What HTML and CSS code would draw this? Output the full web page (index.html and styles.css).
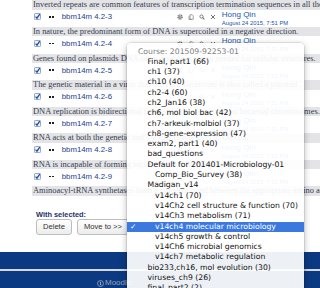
FILE: index.html
```html
<!DOCTYPE html>
<html lang="en">
<head>
    <meta charset="UTF-8">
    <title>Question bank</title>
    <link rel="stylesheet" href="styles.css">
</head>
<body>
    <div class="question-list">
        <div class="question">
            <div class="qtext">Inverted repeats are common features of transcription termination sequences in all the domains of life.</div>
            <div class="qrow">
                <span class="check"><svg viewBox="0 0 8 8" width="7" height="7"><rect x="0.5" y="0.5" width="7" height="7" rx="1" fill="#eef3fb" stroke="#8497b8"/><path d="M1.8 4.2 L3.4 5.9 L6.6 1.2" fill="none" stroke="#1d4b9e" stroke-width="1.4"/></svg></span>
                <span class="qtype"><i></i><i></i></span>
                <a class="qname" href="#">bbm14m 4.2-3</a>
                <span class="actions">
                    <svg viewBox="0 0 12 12"><circle cx="6" cy="6" r="4.2" fill="none" stroke="#707070" stroke-width="2.6" stroke-dasharray="2 1.3"/><circle cx="6" cy="6" r="3.2" fill="#707070"/><circle cx="6" cy="6" r="1.4" fill="#fff"/></svg>
                    <svg viewBox="0 0 12 12"><path d="M4 1.5 H8.5 L10.5 3.5 V10.5 H4 Z" fill="#fff" stroke="#707070" stroke-width="1.3"/><path d="M2 3.5 V11 H7" fill="none" stroke="#707070" stroke-width="1.3"/></svg>
                    <svg viewBox="0 0 12 12"><circle cx="5" cy="5" r="3.2" fill="none" stroke="#707070" stroke-width="1.8"/><path d="M7.3 7.3 L10.8 10.8" stroke="#707070" stroke-width="2.2"/></svg>
                    <svg viewBox="0 0 12 12"><path d="M2 2 L10 10 M10 2 L2 10" stroke="#707070" stroke-width="2"/></svg>
                </span>
                <div class="author"><a class="author-name" href="#">Hong Qin</a><span class="author-date">August 24 2015, 7:51 PM</span></div>
            </div>
        </div>
        <div class="question">
            <div class="qtext">In nature, the predominant form of DNA is supercoiled in a negative direction.</div>
            <div class="qrow">
                <span class="check"><svg viewBox="0 0 8 8" width="7" height="7"><rect x="0.5" y="0.5" width="7" height="7" rx="1" fill="#eef3fb" stroke="#8497b8"/><path d="M1.8 4.2 L3.4 5.9 L6.6 1.2" fill="none" stroke="#1d4b9e" stroke-width="1.4"/></svg></span>
                <span class="qtype"><i></i><i></i></span>
                <a class="qname" href="#">bbm14m 4.2-4</a>
                <span class="actions">
                    <svg viewBox="0 0 12 12"><circle cx="6" cy="6" r="4.2" fill="none" stroke="#707070" stroke-width="2.6" stroke-dasharray="2 1.3"/><circle cx="6" cy="6" r="3.2" fill="#707070"/><circle cx="6" cy="6" r="1.4" fill="#fff"/></svg>
                    <svg viewBox="0 0 12 12"><path d="M4 1.5 H8.5 L10.5 3.5 V10.5 H4 Z" fill="#fff" stroke="#707070" stroke-width="1.3"/><path d="M2 3.5 V11 H7" fill="none" stroke="#707070" stroke-width="1.3"/></svg>
                    <svg viewBox="0 0 12 12"><circle cx="5" cy="5" r="3.2" fill="none" stroke="#707070" stroke-width="1.8"/><path d="M7.3 7.3 L10.8 10.8" stroke="#707070" stroke-width="2.2"/></svg>
                    <svg viewBox="0 0 12 12"><path d="M2 2 L10 10 M10 2 L2 10" stroke="#707070" stroke-width="2"/></svg>
                </span>
                <div class="author"><a class="author-name" href="#">Hong Qin</a><span class="author-date">August 24 2015, 7:51 PM</span></div>
            </div>
        </div>
        <div class="question">
            <div class="qtext">Genes found on plasmids DNA often encode proteins needed for cellular structures.</div>
            <div class="qrow">
                <span class="check"><svg viewBox="0 0 8 8" width="7" height="7"><rect x="0.5" y="0.5" width="7" height="7" rx="1" fill="#eef3fb" stroke="#8497b8"/><path d="M1.8 4.2 L3.4 5.9 L6.6 1.2" fill="none" stroke="#1d4b9e" stroke-width="1.4"/></svg></span>
                <span class="qtype"><i></i><i></i></span>
                <a class="qname" href="#">bbm14m 4.2-5</a>
                <span class="actions">
                    <svg viewBox="0 0 12 12"><circle cx="6" cy="6" r="4.2" fill="none" stroke="#707070" stroke-width="2.6" stroke-dasharray="2 1.3"/><circle cx="6" cy="6" r="3.2" fill="#707070"/><circle cx="6" cy="6" r="1.4" fill="#fff"/></svg>
                    <svg viewBox="0 0 12 12"><path d="M4 1.5 H8.5 L10.5 3.5 V10.5 H4 Z" fill="#fff" stroke="#707070" stroke-width="1.3"/><path d="M2 3.5 V11 H7" fill="none" stroke="#707070" stroke-width="1.3"/></svg>
                    <svg viewBox="0 0 12 12"><circle cx="5" cy="5" r="3.2" fill="none" stroke="#707070" stroke-width="1.8"/><path d="M7.3 7.3 L10.8 10.8" stroke="#707070" stroke-width="2.2"/></svg>
                    <svg viewBox="0 0 12 12"><path d="M2 2 L10 10 M10 2 L2 10" stroke="#707070" stroke-width="2"/></svg>
                </span>
                <div class="author"><a class="author-name" href="#">Hong Qin</a><span class="author-date">August 24 2015, 7:51 PM</span></div>
            </div>
        </div>
        <div class="question">
            <div class="qtext">The genetic material in a virus that infects a bacterium is also called a plasmid.</div>
            <div class="qrow">
                <span class="check"><svg viewBox="0 0 8 8" width="7" height="7"><rect x="0.5" y="0.5" width="7" height="7" rx="1" fill="#eef3fb" stroke="#8497b8"/><path d="M1.8 4.2 L3.4 5.9 L6.6 1.2" fill="none" stroke="#1d4b9e" stroke-width="1.4"/></svg></span>
                <span class="qtype"><i></i><i></i></span>
                <a class="qname" href="#">bbm14m 4.2-6</a>
                <span class="actions">
                    <svg viewBox="0 0 12 12"><circle cx="6" cy="6" r="4.2" fill="none" stroke="#707070" stroke-width="2.6" stroke-dasharray="2 1.3"/><circle cx="6" cy="6" r="3.2" fill="#707070"/><circle cx="6" cy="6" r="1.4" fill="#fff"/></svg>
                    <svg viewBox="0 0 12 12"><path d="M4 1.5 H8.5 L10.5 3.5 V10.5 H4 Z" fill="#fff" stroke="#707070" stroke-width="1.3"/><path d="M2 3.5 V11 H7" fill="none" stroke="#707070" stroke-width="1.3"/></svg>
                    <svg viewBox="0 0 12 12"><circle cx="5" cy="5" r="3.2" fill="none" stroke="#707070" stroke-width="1.8"/><path d="M7.3 7.3 L10.8 10.8" stroke="#707070" stroke-width="2.2"/></svg>
                    <svg viewBox="0 0 12 12"><path d="M2 2 L10 10 M10 2 L2 10" stroke="#707070" stroke-width="2"/></svg>
                </span>
                <div class="author"><a class="author-name" href="#">Hong Qin</a><span class="author-date">August 24 2015, 7:51 PM</span></div>
            </div>
        </div>
        <div class="question">
            <div class="qtext">DNA replication is bidirectional from a single origin in most bacterial chromosomes.</div>
            <div class="qrow">
                <span class="check"><svg viewBox="0 0 8 8" width="7" height="7"><rect x="0.5" y="0.5" width="7" height="7" rx="1" fill="#eef3fb" stroke="#8497b8"/><path d="M1.8 4.2 L3.4 5.9 L6.6 1.2" fill="none" stroke="#1d4b9e" stroke-width="1.4"/></svg></span>
                <span class="qtype"><i></i><i></i></span>
                <a class="qname" href="#">bbm14m 4.2-7</a>
                <span class="actions">
                    <svg viewBox="0 0 12 12"><circle cx="6" cy="6" r="4.2" fill="none" stroke="#707070" stroke-width="2.6" stroke-dasharray="2 1.3"/><circle cx="6" cy="6" r="3.2" fill="#707070"/><circle cx="6" cy="6" r="1.4" fill="#fff"/></svg>
                    <svg viewBox="0 0 12 12"><path d="M4 1.5 H8.5 L10.5 3.5 V10.5 H4 Z" fill="#fff" stroke="#707070" stroke-width="1.3"/><path d="M2 3.5 V11 H7" fill="none" stroke="#707070" stroke-width="1.3"/></svg>
                    <svg viewBox="0 0 12 12"><circle cx="5" cy="5" r="3.2" fill="none" stroke="#707070" stroke-width="1.8"/><path d="M7.3 7.3 L10.8 10.8" stroke="#707070" stroke-width="2.2"/></svg>
                    <svg viewBox="0 0 12 12"><path d="M2 2 L10 10 M10 2 L2 10" stroke="#707070" stroke-width="2"/></svg>
                </span>
                <div class="author"><a class="author-name" href="#">Hong Qin</a><span class="author-date">August 24 2015, 7:51 PM</span></div>
            </div>
        </div>
        <div class="question">
            <div class="qtext">RNA acts at both the genetic and the functional level in the cell.</div>
            <div class="qrow">
                <span class="check"><svg viewBox="0 0 8 8" width="7" height="7"><rect x="0.5" y="0.5" width="7" height="7" rx="1" fill="#eef3fb" stroke="#8497b8"/><path d="M1.8 4.2 L3.4 5.9 L6.6 1.2" fill="none" stroke="#1d4b9e" stroke-width="1.4"/></svg></span>
                <span class="qtype"><i></i><i></i></span>
                <a class="qname" href="#">bbm14m 4.2-8</a>
                <span class="actions">
                    <svg viewBox="0 0 12 12"><circle cx="6" cy="6" r="4.2" fill="none" stroke="#707070" stroke-width="2.6" stroke-dasharray="2 1.3"/><circle cx="6" cy="6" r="3.2" fill="#707070"/><circle cx="6" cy="6" r="1.4" fill="#fff"/></svg>
                    <svg viewBox="0 0 12 12"><path d="M4 1.5 H8.5 L10.5 3.5 V10.5 H4 Z" fill="#fff" stroke="#707070" stroke-width="1.3"/><path d="M2 3.5 V11 H7" fill="none" stroke="#707070" stroke-width="1.3"/></svg>
                    <svg viewBox="0 0 12 12"><circle cx="5" cy="5" r="3.2" fill="none" stroke="#707070" stroke-width="1.8"/><path d="M7.3 7.3 L10.8 10.8" stroke="#707070" stroke-width="2.2"/></svg>
                    <svg viewBox="0 0 12 12"><path d="M2 2 L10 10 M10 2 L2 10" stroke="#707070" stroke-width="2"/></svg>
                </span>
                <div class="author"><a class="author-name" href="#">Hong Qin</a><span class="author-date">August 24 2015, 7:51 PM</span></div>
            </div>
        </div>
        <div class="question">
            <div class="qtext">RNA is incapable of forming secondary structures by base pairing.</div>
            <div class="qrow">
                <span class="check"><svg viewBox="0 0 8 8" width="7" height="7"><rect x="0.5" y="0.5" width="7" height="7" rx="1" fill="#eef3fb" stroke="#8497b8"/><path d="M1.8 4.2 L3.4 5.9 L6.6 1.2" fill="none" stroke="#1d4b9e" stroke-width="1.4"/></svg></span>
                <span class="qtype"><i></i><i></i></span>
                <a class="qname" href="#">bbm14m 4.2-9</a>
                <span class="actions">
                    <svg viewBox="0 0 12 12"><circle cx="6" cy="6" r="4.2" fill="none" stroke="#707070" stroke-width="2.6" stroke-dasharray="2 1.3"/><circle cx="6" cy="6" r="3.2" fill="#707070"/><circle cx="6" cy="6" r="1.4" fill="#fff"/></svg>
                    <svg viewBox="0 0 12 12"><path d="M4 1.5 H8.5 L10.5 3.5 V10.5 H4 Z" fill="#fff" stroke="#707070" stroke-width="1.3"/><path d="M2 3.5 V11 H7" fill="none" stroke="#707070" stroke-width="1.3"/></svg>
                    <svg viewBox="0 0 12 12"><circle cx="5" cy="5" r="3.2" fill="none" stroke="#707070" stroke-width="1.8"/><path d="M7.3 7.3 L10.8 10.8" stroke="#707070" stroke-width="2.2"/></svg>
                    <svg viewBox="0 0 12 12"><path d="M2 2 L10 10 M10 2 L2 10" stroke="#707070" stroke-width="2"/></svg>
                </span>
                <div class="author"><a class="author-name" href="#">Hong Qin</a><span class="author-date">August 24 2015, 7:51 PM</span></div>
            </div>
        </div>
        <div class="question">
            <div class="qtext">Aminoacyl-tRNA synthetases form a covalent bond between the appropriate amino acid and tRNA.</div>
        </div>
    </div>

    <div class="bulk">
        <div class="bulk-label">With selected:</div>
        <div class="bulk-buttons">
            <button>Delete</button>
            <button>Move to &gt;&gt;</button>
        </div>
    </div>

    <footer class="footer">
        <div class="footer-top"></div>
        <div class="footer-bottom">
            <span class="moodle-logo"><svg viewBox="0 0 10 10" width="7" height="7"><circle cx="5" cy="5" r="4.2" fill="none" stroke="#9aa4b6" stroke-width="1.2"/><path d="M5 2.6 V7.4" stroke="#9aa4b6" stroke-width="1.6"/></svg>Moodle</span>
        </div>
    </footer>

    <div class="menu">
        <div class="menu-group">Course: 201509-92253-01</div>
        <div class="menu-item">Final, part1 (66)</div>
        <div class="menu-item">ch1 (37)</div>
        <div class="menu-item">ch10 (40)</div>
        <div class="menu-item">ch2-4 (60)</div>
        <div class="menu-item">ch2_Jan16 (38)</div>
        <div class="menu-item">ch6, mol biol bac (42)</div>
        <div class="menu-item">ch7-arkeuk-molbiol (37)</div>
        <div class="menu-item">ch8-gene-expression (47)</div>
        <div class="menu-item">exam2, part1 (40)</div>
        <div class="menu-item">bad_questions</div>
        <div class="menu-item">Default for 201401-Microbiology-01</div>
        <div class="menu-item sub">Comp_Bio_Survey (38)</div>
        <div class="menu-item">Madigan_v14</div>
        <div class="menu-item sub">v14ch1 (70)</div>
        <div class="menu-item sub">v14Ch2 cell structure &amp; function (70)</div>
        <div class="menu-item sub">v14Ch3 metabolism (71)</div>
        <div class="menu-item sub selected">v14ch4 molecular microbiology</div>
        <div class="menu-item sub">v14ch5 growth &amp; control</div>
        <div class="menu-item sub">v14Ch6 microbial genomics</div>
        <div class="menu-item sub">v14ch7 metabolic regulation</div>
        <div class="menu-item">bio233,ch16, mol evolution (30)</div>
        <div class="menu-item">viruses_ch9 (26)</div>
        <div class="menu-item">final_part2 (2)</div>
    </div>
</body>
</html>
```

FILE: styles.css
```css
body {
    margin: 0;
    width: 320px;
    height: 288px;
    overflow: hidden;
    position: relative;
    background: #fff;
    font-family: "Liberation Sans", Arial, sans-serif;
}

.question-list {
    padding: 0.4px 0 0 32px;
}

.qtext {
    height: 9.4px;
    line-height: 9.4px;
    padding-left: 1px;
    background: #e4e4e6;
    color: #333c50;
    font-family: "Liberation Serif", "Times New Roman", serif;
    font-size: 8.45px;
    white-space: nowrap;
    overflow: hidden;
}

.qrow {
    height: 17.2px;
    box-sizing: border-box;
    padding-bottom: 2.8px;
    display: flex;
    align-items: center;
}

.check {
    display: flex;
    margin-left: 2px;
}

.qtype {
    display: flex;
    gap: 1.2px;
    margin-left: 8px;
}

.qtype i {
    display: block;
    width: 1.8px;
    height: 1.8px;
    background: #222;
}

.qname {
    flex: 0 0 115px;
    margin-left: 8px;
    font-size: 7.8px;
    color: #1d3c8c;
    text-decoration: none;
    white-space: nowrap;
}

.actions {
    display: flex;
    gap: 5px;
}

.actions svg {
    width: 6px;
    height: 6px;
}

.author {
    align-self: flex-start;
    margin-left: 6px;
    white-space: nowrap;
    color: #2156b0;
}

.author-name {
    display: block;
    font-size: 8px;
    line-height: 10px;
    color: #2156b0;
    text-decoration: none;
}

.author-date {
    display: block;
    font-size: 5.9px;
    line-height: 6px;
}

.bulk {
    padding: 14px 0 0 36px;
}

.bulk-label {
    font-size: 7.4px;
    line-height: 9px;
    font-weight: bold;
    color: #1e2f6e;
}

.bulk-buttons {
    display: flex;
    gap: 5px;
}

.bulk-buttons button {
    height: 16px;
    padding: 0 6px;
    border: 1px solid #bdbdbd;
    border-radius: 3px;
    background: linear-gradient(#ffffff, #ececec);
    color: #333;
    font-family: "Liberation Sans", Arial, sans-serif;
    font-size: 7.6px;
}

.footer {
    margin-top: 16.7px;
}

.footer-top {
    height: 17.6px;
    background: #0c3a82;
}

.footer-bottom {
    height: 30px;
    border-top: 2.4px solid #d6dae2;
    background: #0c3a82;
    padding: 8px 0 0 97px;
    box-sizing: border-box;
}

.moodle-logo {
    display: flex;
    align-items: center;
    gap: 1px;
    font-size: 8px;
    line-height: 8px;
    color: #9aa4b6;
}

.menu {
    position: absolute;
    left: 126.5px;
    top: 43px;
    width: 177px;
    height: 270px;
    padding-top: 3.5px;
    box-sizing: border-box;
    background: rgba(255, 255, 255, 0.93);
    border-radius: 4px;
    box-shadow: 0 2px 7px rgba(0, 0, 0, 0.3), 0 0 0 0.5px rgba(0, 0, 0, 0.15);
    font-family: "DejaVu Sans", "Noto Sans", sans-serif;
    font-size: 7.7px;
    line-height: 10.3px;
    color: #111;
}

.menu-group {
    padding-left: 11.5px;
    color: #808080;
}

.menu-item {
    position: relative;
    padding-left: 21px;
    white-space: nowrap;
}

.menu-item.sub {
    padding-left: 28.5px;
}

.menu-item.selected {
    background: #3b79df;
    color: #fff;
}

.menu-item.selected::before {
    content: "\2713";
    position: absolute;
    left: 3.5px;
}
```
